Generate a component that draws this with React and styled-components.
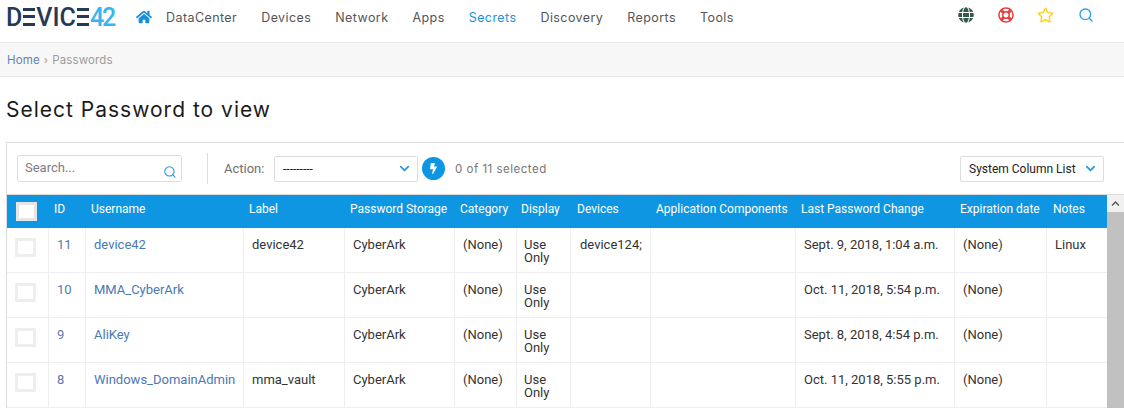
import React from "react";
import styled, { createGlobalStyle } from "styled-components";
import { FaHome, FaGlobe, FaRegLifeRing, FaRegStar, FaBolt, FaChevronUp } from "react-icons/fa";
import { Search, ChevronDown } from "lucide-react";

const GlobalStyle = createGlobalStyle`
  html, body {
    margin: 0;
    padding: 0;
    height: 409px;
    overflow: hidden;
    background: #fff;
    font-family: Roboto, "Liberation Sans", sans-serif;
  }
  * { box-sizing: border-box; }
`;

const Header = styled.header`
  height: 43px;
  border-bottom: 1px solid #eaeaea;
  display: flex;
  align-items: flex-start;
  padding-left: 6px;
`;

const Logo = styled.div`
  width: 130px;
  height: 34px;
  display: flex;
  align-items: center;
  font-family: Roboto, sans-serif;
  font-weight: 500;
  font-size: 25px;
  line-height: 1;
  color: #263a57;
`;

const LogoBars = styled.span`
  width: 12px;
  height: 18px;
  margin: 0 ${(p) => p.$gap || 1}px 0 1px;
  background: repeating-linear-gradient(
    to bottom,
    #263a57 0 3px,
    transparent 3px 7.5px
  );
`;

const LogoNumber = styled.span`
  color: #35b6ee;
  font-weight: 500;
  letter-spacing: -2px;
`;

const HomeLink = styled.a`
  display: flex;
  margin: 9px 14px 0 0;
  color: #1a8fdc;
  font-size: 16px;
`;

const Nav = styled.nav`
  display: flex;
  gap: 24px;
  padding-top: 9px;
  font-family: Inter, sans-serif;
  font-size: 12.5px;
  line-height: 17px;
  letter-spacing: 0.42px;
`;

const NavLink = styled.a`
  color: ${(p) => (p.$active ? "#1a94dc" : "#555")};
`;

const HeaderIcons = styled.div`
  margin-left: auto;
  display: flex;
  align-items: center;
  gap: 23px;
  padding: 6px 30px 0 0;
`;

const HeaderIcon = styled.span`
  display: flex;
  width: 17px;
  justify-content: center;
  color: ${(p) => p.$color};
  font-size: ${(p) => p.$size || 16}px;
`;

const Breadcrumb = styled.div`
  height: 34px;
  background: #f7f7f7;
  border-bottom: 1px solid #eaeaea;
  display: flex;
  align-items: center;
  padding-left: 7px;
  font-family: Inter, sans-serif;
  font-size: 11.5px;
  letter-spacing: 0.14px;
  color: #a09a9a;
`;

const CrumbLink = styled.a`
  color: #5f83b5;
`;

const CrumbSep = styled.span`
  margin: 0 4px;
  font-size: 11px;
`;

const Title = styled.h1`
  margin: 0;
  height: 65px;
  padding: 20px 0 0 6px;
  font-family: Inter, sans-serif;
  font-size: 21px;
  font-weight: 400;
  line-height: 26px;
  letter-spacing: 1px;
  color: #1b1b1b;
`;

const Panel = styled.section`
  margin-left: 6px;
  border-top: 1px solid #ddd;
  border-left: 1px solid #ddd;
`;

const Toolbar = styled.div`
  height: 52px;
  display: flex;
  align-items: center;
  padding: 0 20px 0 10px;
  border-bottom: 1px solid #ddd;
`;

const SearchBox = styled.div`
  position: relative;
  width: 165px;
  height: 27px;
`;

const SearchInput = styled.input`
  width: 100%;
  height: 100%;
  border: 1px solid #ddd;
  border-radius: 3px;
  padding: 0 24px 2px 7px;
  font-family: Roboto, sans-serif;
  font-size: 13px;
  outline: none;
  &::placeholder {
    color: #7d7d85;
    opacity: 1;
  }
`;

const SearchIcon = styled.span`
  position: absolute;
  right: 5px;
  bottom: 3px;
  display: flex;
  color: #1f93e0;
`;

const Divider = styled.div`
  width: 1px;
  height: 31px;
  background: #ddd;
  margin: 0 16px 0 25px;
`;

const ActionLabel = styled.span`
  width: 50px;
  font-size: 13px;
  color: #6f6f6f;
`;

const Dropdown = styled.div`
  width: 144px;
  height: 26px;
  display: flex;
  align-items: center;
  justify-content: space-between;
  padding: 0 5px 0 8px;
  border: 1px solid #ddd;
  border-radius: 2px;
  font-size: 12px;
  color: #222;
  svg {
    color: #1f93e0;
    flex: none;
  }
`;

const RunButton = styled.button`
  width: 23px;
  height: 23px;
  margin-left: 4px;
  padding: 0;
  border: none;
  border-radius: 50%;
  background: #0f96e2;
  color: #fff;
  display: flex;
  align-items: center;
  justify-content: center;
  font-size: 11px;
`;

const SelectedCount = styled.span`
  margin-left: 10px;
  font-family: Inter, sans-serif;
  font-size: 11.5px;
  letter-spacing: 0.5px;
  color: #777;
`;

const ColumnList = styled.div`
  margin-left: auto;
`;

const TableArea = styled.div`
  display: flex;
  align-items: stretch;
`;

const Table = styled.table`
  width: 1100px;
  flex: none;
  table-layout: fixed;
  border-collapse: separate;
  border-spacing: 0;
  font-size: 13px;
  line-height: 13px;
`;

const HeadCell = styled.th`
  height: 33px;
  padding: 0 0 5px ${(p) => p.$pad ?? 5}px;
  background: #0f96e2;
  color: #fff;
  font-size: 12px;
  font-weight: 400;
  text-align: left;
  white-space: nowrap;
`;

const Cell = styled.td`
  height: 45px;
  padding: 10px 4px 0 ${(p) => p.$pad ?? 8}px;
  vertical-align: top;
  color: #333;
  border-right: 1px solid #eee;
  border-bottom: 1px solid #eee;
  &:last-child { border-right: none; }
`;

const Checkbox = styled.span`
  display: block;
  width: 21px;
  height: 19px;
  background: #fff;
  border: 3px solid ${(p) => (p.$head ? "#e6e6e6" : "#eee")};
  margin: ${(p) => (p.$head ? "4px 0 0 4px" : "0")};
`;

const IdLink = styled.a`
  color: #5b79ad;
`;

const NameLink = styled.a`
  color: #4a78b5;
  white-space: nowrap;
`;

const Scrollbar = styled.div`
  width: 17px;
  flex: none;
  display: flex;
  flex-direction: column;
`;

const ScrollButton = styled.div`
  height: 17px;
  background: #f1f1f1;
  display: flex;
  align-items: center;
  justify-content: center;
  color: #555;
  font-size: 9px;
`;

const ScrollThumb = styled.div`
  flex: 1;
  background: #c1c1c1;
`;

const navItems = ["DataCenter", "Devices", "Network", "Apps", "Secrets", "Discovery", "Reports", "Tools"];

const columns = [
  { name: "", width: 42 },
  { name: "ID", width: 37 },
  { name: "Username", width: 158 },
  { name: "Label", width: 101 },
  { name: "Password Storage", width: 110 },
  { name: "Category", width: 62 },
  { name: "Display", width: 54, pad: 4 },
  { name: "Devices", width: 80, pad: 6 },
  { name: "Application Components", width: 145 },
  { name: "Last Password Change", width: 159 },
  { name: "Expiration date", width: 92 },
  { name: "Notes", width: 60, pad: 6 },
];

const rows = [
  { id: 11, name: "device42", label: "device42", devices: "device124;", changed: "Sept. 9, 2018, 1:04 a.m.", notes: "Linux" },
  { id: 10, name: "MMA_CyberArk", label: "", devices: "", changed: "Oct. 11, 2018, 5:54 p.m.", notes: "" },
  { id: 9, name: "AliKey", label: "", devices: "", changed: "Sept. 8, 2018, 4:54 p.m.", notes: "" },
  { id: 8, name: "Windows_DomainAdmin", label: "mma_vault", devices: "", changed: "Oct. 11, 2018, 5:55 p.m.", notes: "" },
];

const App = () => {
  return (
    <>
      <GlobalStyle />
      <Header>
        <Logo>
          D<LogoBars />VIC<LogoBars $gap={0} />
          <LogoNumber>42</LogoNumber>
        </Logo>
        <HomeLink>
          <FaHome />
        </HomeLink>
        <Nav>
          {navItems.map((item) => (
            <NavLink key={item} $active={item === "Secrets"}>
              {item}
            </NavLink>
          ))}
        </Nav>
        <HeaderIcons>
          <HeaderIcon $color="#34594a"><FaGlobe /></HeaderIcon>
          <HeaderIcon $color="#e5403f"><FaRegLifeRing /></HeaderIcon>
          <HeaderIcon $color="#fdd120" $size={18}><FaRegStar /></HeaderIcon>
          <HeaderIcon $color="#2b9fe8"><Search size={16} strokeWidth={2} /></HeaderIcon>
        </HeaderIcons>
      </Header>
      <Breadcrumb>
        <CrumbLink>Home</CrumbLink>
        <CrumbSep>›</CrumbSep>
        Passwords
      </Breadcrumb>
      <Title>Select Password to view</Title>
      <Panel>
        <Toolbar>
          <SearchBox>
            <SearchInput placeholder="Search..." />
            <SearchIcon><Search size={14} strokeWidth={1.75} /></SearchIcon>
          </SearchBox>
          <Divider />
          <ActionLabel>Action:</ActionLabel>
          <Dropdown>
            ---------
            <ChevronDown size={15} strokeWidth={2.5} />
          </Dropdown>
          <RunButton><FaBolt /></RunButton>
          <SelectedCount>0 of 11 selected</SelectedCount>
          <ColumnList>
            <Dropdown>
              System Column List
              <ChevronDown size={15} strokeWidth={2.5} />
            </Dropdown>
          </ColumnList>
        </Toolbar>
        <TableArea>
          <Table>
            <colgroup>
              {columns.map((col) => (
                <col key={col.name || "check"} style={{ width: col.width }} />
              ))}
            </colgroup>
            <thead>
              <tr>
                {columns.map((col) => (
                  <HeadCell key={col.name || "check"} $pad={col.pad}>
                    {col.name || <Checkbox $head />}
                  </HeadCell>
                ))}
              </tr>
            </thead>
            <tbody>
              {rows.map((row) => (
                <tr key={row.id}>
                  <Cell><Checkbox /></Cell>
                  <Cell><IdLink>{row.id}</IdLink></Cell>
                  <Cell><NameLink>{row.name}</NameLink></Cell>
                  <Cell>{row.label}</Cell>
                  <Cell>CyberArk</Cell>
                  <Cell>(None)</Cell>
                  <Cell $pad={7}>Use Only</Cell>
                  <Cell $pad={9}>{row.devices}</Cell>
                  <Cell />
                  <Cell>{row.changed}</Cell>
                  <Cell>(None)</Cell>
                  <Cell>{row.notes}</Cell>
                </tr>
              ))}
            </tbody>
          </Table>
          <Scrollbar>
            <ScrollButton><FaChevronUp /></ScrollButton>
            <ScrollThumb />
          </Scrollbar>
        </TableArea>
      </Panel>
    </>
  );
};

export default App;
